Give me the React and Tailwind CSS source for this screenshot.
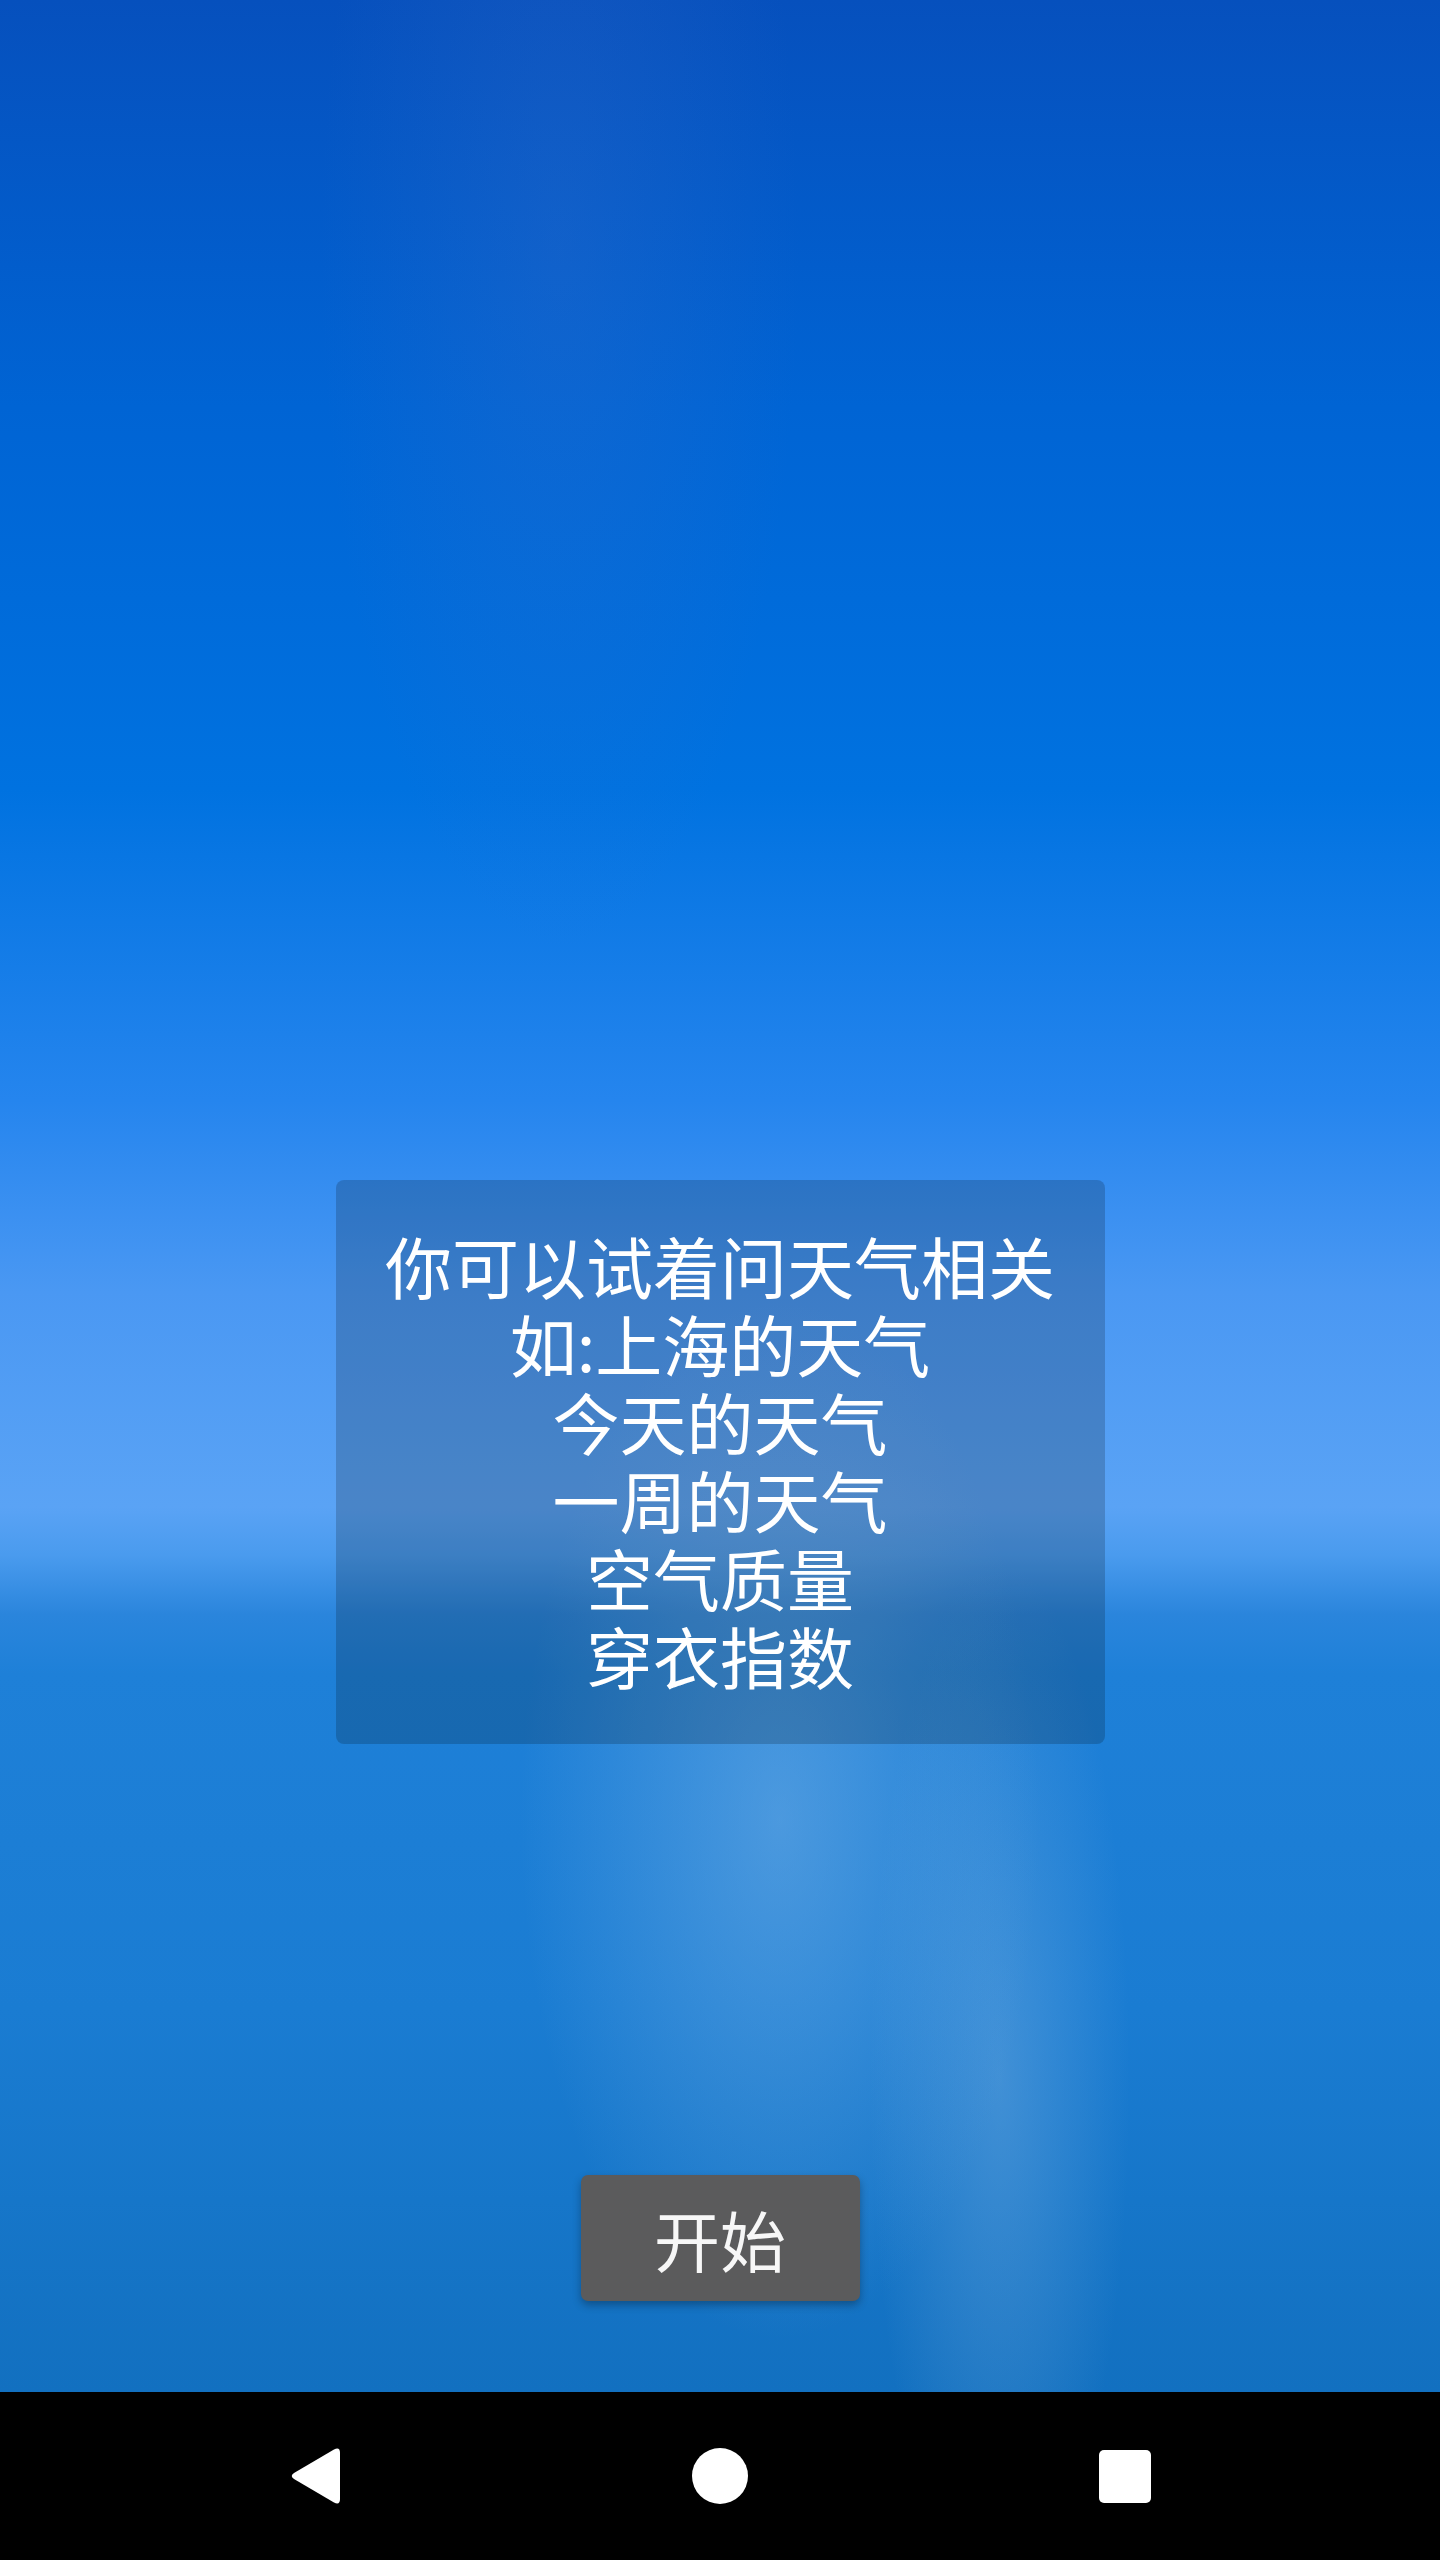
import React from 'react';

const tips = ['你可以试着问天气相关', '如:上海的天气', '今天的天气', '一周的天气', '空气质量', '穿衣指数'];

const BackIcon = () => (
  <svg width="52" height="58" viewBox="0 0 52 58" className="block">
    <path d="M45 2.5 L5 26 Q0.5 29 5 32 L45 55.5 Q51 58.5 51 52 L51 6 Q51 -0.5 45 2.5 Z" fill="#fff" />
  </svg>
);

const App = () => {
  return (
    <div className="w-[1440px] h-[2560px] flex flex-col font-['Noto_Sans_CJK_SC','Noto_Sans',sans-serif]">
      <div className="h-[2392px] flex flex-col items-center bg-[radial-gradient(ellipse_260px_520px_at_780px_1820px,rgba(140,190,235,0.42),transparent),radial-gradient(ellipse_130px_520px_at_1000px_2080px,rgba(130,180,225,0.38),transparent),radial-gradient(ellipse_240px_700px_at_560px_250px,rgba(60,110,200,0.25),transparent),linear-gradient(180deg,#0650bd_0%,#0064d4_17%,#0072e0_33%,#2585ee_46%,#4a98f3_54%,#5aa3f5_63%,#4a9bee_65%,#2a85dc_67.5%,#1e80d8_70%,#1a7cd2_84%,#1270c0_100%)]">
        <div className="mt-[1180px] w-[769px] h-[564px] pb-[4px] rounded-[8px] bg-black/[0.18] flex flex-col items-center justify-center text-white text-[67px] leading-[78px] text-center">
          {tips.map(t => (
            <div key={t} className="h-[78px]">{t}</div>
          ))}
        </div>
        <button className="mt-[431px] w-[279px] h-[126px] rounded-[7px] bg-[#5b5b5c] text-[#f7f7f7] text-[66px] leading-none shadow-[0_4px_8px_rgba(0,0,0,0.3)] flex items-center justify-center">
          开始
        </button>
      </div>
      <div className="h-[168px] bg-black flex items-center justify-center gap-[349px]">
        <div className="w-[56px] flex justify-center">
          <BackIcon />
        </div>
        <div className="w-[56px] h-[56px] rounded-full bg-white" />
        <div className="w-[56px] flex justify-center">
          <div className="w-[52px] h-[53px] rounded-[5px] bg-white" />
        </div>
      </div>
    </div>
  );
};

export default App;
